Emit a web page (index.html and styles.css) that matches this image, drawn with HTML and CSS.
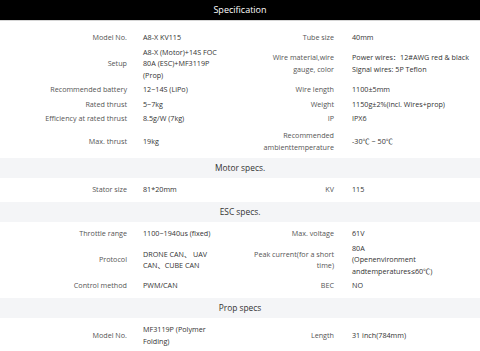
FILE: index.html
```html
<!DOCTYPE html>
<html lang="en">
<head>
  <meta charset="utf-8">
  <title>A8-X KV115 — Specification</title>
  <meta name="viewport" content="width=device-width, initial-scale=1">
  <link rel="stylesheet" href="styles.css">
</head>
<body>
  <section class="spec">
    <h2 class="spec__title">Specification</h2>

    <div class="spec__body spec__body--first">
      <table class="spec__table">
        <colgroup>
          <col class="spec__col-label1">
          <col class="spec__col-value1">
          <col class="spec__col-label2">
          <col>
        </colgroup>
        <tr>
          <th>Model No.</th>
          <td>A8-X KV115</td>
          <th>Tube size</th>
          <td>40mm</td>
        </tr>
        <tr>
          <th>Setup</th>
          <td>A8-X (Motor)+14S FOC 80A (ESC)+MF3119P (Prop)</td>
          <th>Wire material,wire<br>gauge, color</th>
          <td>Power wires<span class="cjk">：</span>12#AWG red &amp; black<br>Signal wires: 5P Teflon</td>
        </tr>
        <tr>
          <th>Recommended battery</th>
          <td>12~14S (LiPo)</td>
          <th>Wire length</th>
          <td>1100±5mm</td>
        </tr>
        <tr>
          <th>Rated thrust</th>
          <td>5~7kg</td>
          <th>Weight</th>
          <td>1150g±2%(incl. Wires+prop)</td>
        </tr>
        <tr>
          <th>Efficiency at rated thrust</th>
          <td>8.5g/W (7kg)</td>
          <th>IP</th>
          <td>IPX6</td>
        </tr>
        <tr class="spec__row--tall">
          <th>Max. thrust</th>
          <td>19kg</td>
          <th>Recommended ambienttemperature</th>
          <td>-30℃ ~ 50℃</td>
        </tr>
      </table>
    </div>

    <h3 class="spec__group">Motor specs.</h3>
    <div class="spec__body">
      <table class="spec__table">
        <colgroup>
          <col class="spec__col-label1">
          <col class="spec__col-value1">
          <col class="spec__col-label2">
          <col>
        </colgroup>
        <tr>
          <th>Stator size</th>
          <td>81*20mm</td>
          <th>KV</th>
          <td>115</td>
        </tr>
      </table>
    </div>

    <h3 class="spec__group">ESC specs.</h3>
    <div class="spec__body">
      <table class="spec__table">
        <colgroup>
          <col class="spec__col-label1">
          <col class="spec__col-value1">
          <col class="spec__col-label2">
          <col>
        </colgroup>
        <tr>
          <th>Throttle range</th>
          <td>1100~1940us (fixed)</td>
          <th>Max. voltage</th>
          <td>61V</td>
        </tr>
        <tr>
          <th>Protocol</th>
          <td>DRONE CAN、 UAV CAN、CUBE CAN</td>
          <th>Peak current(for a short time)</th>
          <td>80A<br>(Openenvironment andtemperatures≤60℃)</td>
        </tr>
        <tr>
          <th>Control method</th>
          <td>PWM/CAN</td>
          <th>BEC</th>
          <td>NO</td>
        </tr>
      </table>
    </div>

    <h3 class="spec__group">Prop specs</h3>
    <div class="spec__body">
      <table class="spec__table">
        <colgroup>
          <col class="spec__col-label1">
          <col class="spec__col-value1">
          <col class="spec__col-label2">
          <col>
        </colgroup>
        <tr>
          <th>Model No.</th>
          <td>MF3119P (Polymer Folding)</td>
          <th>Length</th>
          <td>31 inch(784mm)</td>
        </tr>
      </table>
    </div>
  </section>
</body>
</html>
```

FILE: styles.css
```css
*, *::before, *::after {
  margin: 0;
  padding: 0;
  box-sizing: border-box;
}

body {
  margin: 0;
  background-color: #ffffff;
  font-family: "Open Sans", "Noto Sans CJK SC", sans-serif;
  font-size: 7.2px;
  line-height: 11.5px;
  color: #333333;
}

.cjk {
  font-family: "Noto Sans CJK SC", sans-serif;
}

.spec__title {
  height: 21px;
  padding-top: 4px;
  background-color: #000000;
  border-bottom: 1px solid #d6d6d6;
  color: #ffffff;
  font-size: 9px;
  font-weight: 400;
  line-height: 12px;
  text-align: center;
}

.spec__group {
  padding: 4.5px 0;
  background-color: #f4f5f7;
  color: #333333;
  font-size: 8.4px;
  font-weight: 400;
  line-height: 11.5px;
  text-align: center;
}

.spec__body {
  padding: 4.5px 0;
}

.spec__body--first {
  padding: 9.5px 0 0;
}

.spec__table {
  width: 100%;
  table-layout: fixed;
  border-collapse: collapse;
}

.spec__col-label1 {
  width: 136px;
}

.spec__col-value1 {
  width: 104px;
}

.spec__col-label2 {
  width: 103px;
}

.spec__table th,
.spec__table td {
  padding: 1.5px 0;
  vertical-align: middle;
  font-weight: 400;
}

.spec__table th {
  padding-right: 9px;
  color: #555555;
  text-align: right;
}

.spec__table td {
  text-align: left;
}

.spec__table td:nth-child(2) {
  padding-left: 7px;
  padding-right: 16px;
}

.spec__table td:nth-child(4) {
  padding-left: 9px;
  padding-right: 4px;
}

.spec__row--tall th,
.spec__row--tall td {
  padding-top: 4.4px;
  padding-bottom: 4.4px;
}
```
